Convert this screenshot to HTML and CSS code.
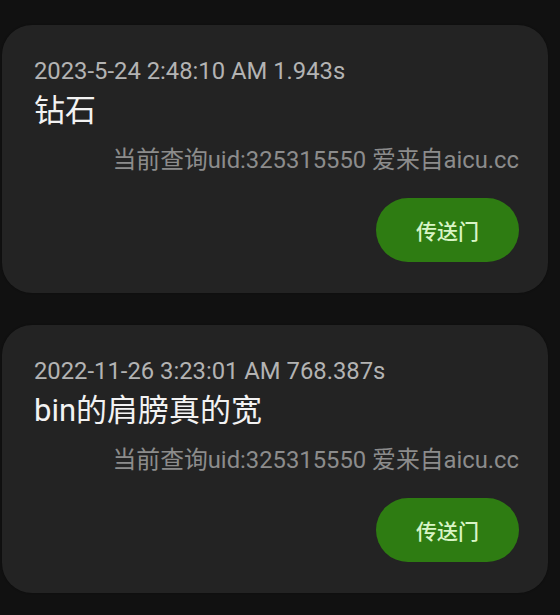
FILE: index.html
```html
<!DOCTYPE html>
<html lang="zh">
<head>
<meta charset="utf-8">
<link rel="stylesheet" href="styles.css">
</head>
<body>
<div class="list">
  <div class="card">
    <div class="date">2023-5-24 2:48:10 AM 1.943s</div>
    <div class="title">钻石</div>
    <div class="uid">当前查询uid:325315550 爱来自aicu.cc</div>
    <div class="actions"><button class="btn">传送门</button></div>
  </div>
  <div class="card">
    <div class="date">2022-11-26 3:23:01 AM 768.387s</div>
    <div class="title">bin的肩膀真的宽</div>
    <div class="uid">当前查询uid:325315550 爱来自aicu.cc</div>
    <div class="actions"><button class="btn">传送门</button></div>
  </div>
</div>
</body>
</html>
```

FILE: styles.css
```css
html, body {
  margin: 0;
  padding: 0;
  background: #111111;
}
body {
  width: 560px;
  height: 615px;
  overflow: hidden;
  font-family: Roboto, "Noto Sans CJK SC", sans-serif;
}
.list {
  display: flex;
  flex-direction: column;
  gap: 32px;
  padding: 25px 12px 0 2px;
}
.card {
  background: #232323;
  border-radius: 30px;
  padding: 32px 29px 31px 32px;
  display: flex;
  flex-direction: column;
  box-shadow: 0 0 2px rgba(0,0,0,0.4);
}
.date {
  font-size: 23.8px;
  line-height: 28px;
  color: #b3b3b3;
}
.title {
  font-size: 31px;
  line-height: 36px;
  color: #f2f2f2;
  margin-top: 8px;
}
.uid {
  font-size: 23.8px;
  line-height: 28px;
  color: #8c8c8c;
  text-align: right;
  margin-top: 17px;
}
.actions {
  display: flex;
  justify-content: flex-end;
  margin-top: 24px;
}
.btn {
  width: 143px;
  height: 64px;
  border: none;
  border-radius: 32px;
  background: #2e7c12;
  color: #d9f5c6;
  font-family: Roboto, "Noto Sans CJK SC", sans-serif;
  font-size: 21px;
  font-weight: 500;
  padding: 0;
}
```
